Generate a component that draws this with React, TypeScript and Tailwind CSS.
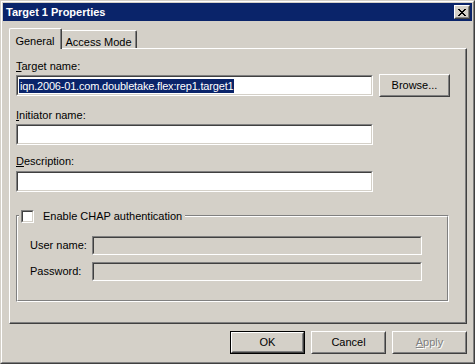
import React from "react";

const Raised = ({ className = "", children }: { className?: string; children?: React.ReactNode }) => (
    <div className={"border border-t-white border-l-white border-r-[#404040] border-b-[#404040] bg-[#D4D0C8] " + className}>
        <div className="w-full h-full border border-t-[#D4D0C8] border-l-[#D4D0C8] border-r-[#808080] border-b-[#808080] flex items-center justify-center">
            {children}
        </div>
    </div>
);

const Sunken = ({ className = "", disabled = false, children }: { className?: string; disabled?: boolean; children?: React.ReactNode }) => (
    <div className={"border border-t-[#808080] border-l-[#808080] border-r-white border-b-white " + className}>
        <div className={"w-full h-full border border-t-[#404040] border-l-[#404040] border-r-[#D4D0C8] border-b-[#D4D0C8] flex items-center " + (disabled ? "bg-[#D4D0C8]" : "bg-white")}>
            {children}
        </div>
    </div>
);

const Label = ({ first, rest }: { first: string; rest: string }) => (
    <div className="h-[13px] leading-[13px]">
        <span className="underline underline-offset-[1px]">{first}</span>{rest}
    </div>
);

const App = (): JSX.Element => {
    return (
        <div className="w-[475px] h-[364px] bg-[#D4D0C8] text-[11px] text-black font-['Liberation_Sans',Arial,sans-serif] border border-t-[#D4D0C8] border-l-[#D4D0C8] border-r-[#404040] border-b-[#404040]">
            <div className="h-full border border-t-white border-l-white border-r-[#808080] border-b-[#808080] p-px flex flex-col">
                {/* title bar */}
                <div className="h-[18px] bg-[#0A246A] flex items-center justify-between pl-[3px] pr-[2px]">
                    <span className="text-white font-bold text-[11px]">Target 1 Properties</span>
                    <Raised className="w-[16px] h-[14px]">
                        <svg width="8" height="7" viewBox="0 0 8 7" shapeRendering="crispEdges">
                            <path d="M0 0h2v1h-2zM6 0h2v1h-2zM1 1h2v1h-2zM5 1h2v1h-2zM2 2h4v1h-4zM3 3h2v1h-2zM2 4h4v1h-4zM1 5h2v1h-2zM5 5h2v1h-2zM0 6h2v1h-2zM6 6h2v1h-2z" fill="#000" />
                        </svg>
                    </Raised>
                </div>

                <div className="flex-1 flex flex-col pt-[7px] pl-[6px] pr-[5px]">
                    {/* tabs */}
                    <div className="h-[20px] flex items-end">
                        <div className="relative z-10 h-[21px] -mb-px w-[53px] bg-[#D4D0C8] border-t border-l border-t-white border-l-white border-r border-r-[#404040] rounded-tl-[2px] rounded-tr-[2px]">
                            <div className="h-full border-r border-r-[#808080] flex items-start justify-center pt-[4px]">General</div>
                        </div>
                        <div className="h-[18px] w-[75px] bg-[#D4D0C8] border-t border-t-white border-r border-r-[#404040] rounded-tr-[2px]">
                            <div className="h-full border-r border-r-[#808080] flex items-start justify-center pt-[3px]">Access Mode</div>
                        </div>
                    </div>

                    {/* panel */}
                    <div className="h-[276px] border border-t-white border-l-white border-r-[#404040] border-b-[#404040]">
                        <div className="h-full border-r border-b border-r-[#808080] border-b-[#808080] pl-[6px] pt-[11px] flex flex-col">
                            <Label first="T" rest="arget name:" />
                            <div className="flex items-start mt-[1px]">
                                <Sunken className="w-[357px] h-[21px] mt-px">
                                    <span className="ml-px h-[14px] leading-[14px] px-px bg-[#0A246A] text-white tracking-[-0.18px]">iqn.2006-01.com.doubletake.flex:rep1.target1</span>
                                </Sunken>
                                <Raised className="ml-[6px] w-[71px] h-[23px]">
                                    <span>Browse...</span>
                                </Raised>
                            </div>

                            <div className="mt-[12px]"><Label first="I" rest="nitiator name:" /></div>
                            <Sunken className="mt-[2px] w-[357px] h-[21px]" />

                            <div className="mt-[10px]"><Label first="D" rest="escription:" /></div>
                            <Sunken className="mt-[3px] w-[357px] h-[21px]" />

                            {/* group box */}
                            <div className="relative mt-[23px] w-[433px] h-[87px] border border-t-[#808080] border-l-[#808080] border-r-white border-b-white">
                                <div className="h-full border border-t-white border-l-white border-r-[#808080] border-b-[#808080] pt-[19px] pl-[12px] flex flex-col gap-[7px]">
                                    <div className="flex items-center">
                                        <span className="w-[62px]">User name:</span>
                                        <Sunken disabled className="w-[330px] h-[19px]" />
                                    </div>
                                    <div className="flex items-center">
                                        <span className="w-[62px]">Password:</span>
                                        <Sunken disabled className="w-[330px] h-[19px]" />
                                    </div>
                                </div>
                                <div className="absolute left-[2px] top-[-6px] flex items-center bg-[#D4D0C8] pl-[2px] pr-[3px]">
                                    <Sunken className="w-[13px] h-[13px]" />
                                    <span className="ml-[9px] h-[13px] leading-[13px]">Enable CHAP authentication</span>
                                </div>
                            </div>
                        </div>
                    </div>

                    {/* buttons */}
                    <div className="mt-[7px] flex justify-end gap-[6px]">
                        <div className="border border-black">
                            <Raised className="w-[73px] h-[21px]">OK</Raised>
                        </div>
                        <Raised className="w-[75px] h-[23px]">Cancel</Raised>
                        <Raised className="w-[75px] h-[23px]">
                            <span className="text-[#808080] [text-shadow:1px_1px_0_#ffffff]">
                                <span className="underline underline-offset-[1px]">A</span>pply
                            </span>
                        </Raised>
                    </div>
                </div>
            </div>
        </div>
    );
};

export default App;
